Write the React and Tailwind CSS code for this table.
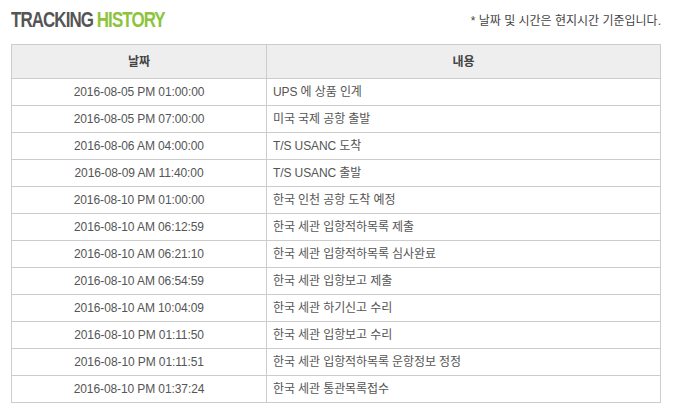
export default function App() {
  const rows = [
    ["2016-08-05 PM 01:00:00", "UPS 에 상품 인계"],
    ["2016-08-05 PM 07:00:00", "미국 국제 공항 출발"],
    ["2016-08-06 AM 04:00:00", "T/S USANC 도착"],
    ["2016-08-09 AM 11:40:00", "T/S USANC 출발"],
    ["2016-08-10 PM 01:00:00", "한국 인천 공항 도착 예정"],
    ["2016-08-10 AM 06:12:59", "한국 세관 입항적하목록 제출"],
    ["2016-08-10 AM 06:21:10", "한국 세관 입항적하목록 심사완료"],
    ["2016-08-10 AM 06:54:59", "한국 세관 입항보고 제출"],
    ["2016-08-10 AM 10:04:09", "한국 세관 하기신고 수리"],
    ["2016-08-10 PM 01:11:50", "한국 세관 입항보고 수리"],
    ["2016-08-10 PM 01:11:51", "한국 세관 입항적하목록 운항정보 정정"],
    ["2016-08-10 PM 01:37:24", "한국 세관 통관목록접수"],
  ];
  const font = { fontFamily: '"Liberation Sans", "Noto Sans CJK KR", sans-serif' };
  return (
    <div className="w-[678px] h-[417px] bg-white px-[11px] pt-[9px]" style={font}>
      <div className="flex items-end justify-between w-[650px] h-[22px]">
        <h1 className="text-[22px] font-bold leading-none tracking-[-1.2px] text-[#555555] origin-left scale-x-[0.77] whitespace-nowrap">
          TRACKING <span className="text-[#8cc43c]">HISTORY</span>
        </h1>
        <p className="text-[12px] leading-none text-[#444444] mb-[4px]">* 날짜 및 시간은 현지시간 기준입니다.</p>
      </div>
      <table className="mt-[13px] w-[650px] border-collapse text-[12px] text-[#555555] tracking-[-0.1px]">
        <thead>
          <tr className="h-[34px] bg-[#eeeeee]">
            <th className="w-[255px] border border-[#cccccc] font-bold text-[#444444] text-center">날짜</th>
            <th className="border border-[#cccccc] font-bold text-[#444444] text-center">내용</th>
          </tr>
        </thead>
        <tbody>
          {rows.map(([d, c]) => (
            <tr key={d} className="h-[27px]">
              <td className="border border-[#cccccc] text-center">{d}</td>
              <td className="border border-[#cccccc] pl-[6px]">{c}</td>
            </tr>
          ))}
        </tbody>
      </table>
    </div>
  );
}
